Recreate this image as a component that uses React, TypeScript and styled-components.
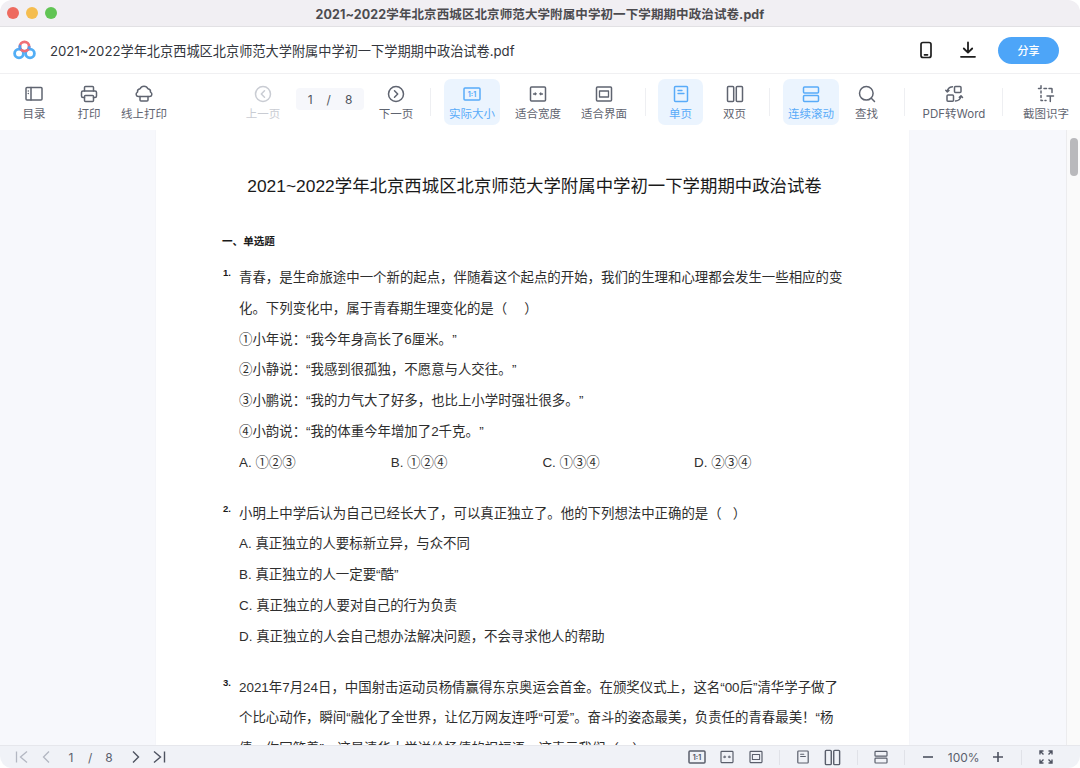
import React from 'react';
import styled, { createGlobalStyle } from 'styled-components';

const Global = createGlobalStyle`
  html, body { margin: 0; padding: 0; background: #fff; width: 1080px; height: 768px; overflow: hidden; }
  body { font-family: "Inter", "Noto Sans CJK SC", sans-serif; }
  * { box-sizing: border-box; }
`;
const FONT = `"Liberation Sans", "Noto Sans CJK SC", sans-serif`;
const UI = `"Inter", "Noto Sans CJK SC", sans-serif`;

const Win = styled.div`
  width: 1080px; height: 768px; border-radius: 12px; overflow: hidden;
  display: flex; flex-direction: column; background: #fff;
`;
const TitleBar = styled.div`
  height: 27px; flex: none; background: #f1eff3; border-bottom: 1px solid #e2e1e4;
  position: relative; display: flex; align-items: center; justify-content: center;
  font: 700 12.5px ${UI}; color: #4c4b4f; letter-spacing: 0.1px;
`;
const Lights = styled.div`
  position: absolute; left: 7px; top: 7px; display: flex; gap: 7px;
`;
const Light = styled.span<{ $c: string }>`
  width: 12px; height: 12px; border-radius: 50%; background: ${p => p.$c};
`;
const Header = styled.div`
  height: 47px; flex: none; display: flex; align-items: center; padding: 0 21px 0 13px;
  border-bottom: 1px solid #f0f0f2; background: #fff;
`;
const Logo = styled.svg`width: 23px; height: 20px; flex: none;`;
const FileName = styled.div`
  margin-left: 14px; font: 400 13.2px ${UI}; color: #33363d; flex: 1; white-space: nowrap;
`;
const HeadIcon = styled.svg`width: 18px; height: 18px; flex: none; margin-right: 24px;`;
const ShareBtn = styled.div`
  width: 61px; height: 27px; border-radius: 14px; background: #4da5f8; color: #fff;
  font: 500 11px ${UI}; display: flex; align-items: center; justify-content: center; margin-left: -3px;
`;
const Toolbar = styled.div`
  height: 56px; flex: none; display: flex; align-items: flex-start; padding: 5px 0 0 9px; background: #fff;
`;
const Tool = styled.div<{ $w: number; $ml?: number; $on?: boolean; $off?: boolean }>`
  width: ${p => p.$w}px; height: 46px; margin-left: ${p => p.$ml ?? 0}px; flex: none;
  display: flex; flex-direction: column; align-items: center; padding-top: 5px;
  border-radius: 7px; white-space: nowrap;
  background: ${p => (p.$on ? '#ebf4fe' : 'transparent')};
  color: ${p => (p.$on ? '#58abf9' : p.$off ? '#c9ccd3' : '#5f6470')};
  font: 400 11.5px/15px ${UI};
  svg { width: 20px; height: 20px; margin-bottom: 3px; flex: none; }
`;
const PageBox = styled.div`
  width: 68px; height: 22px; margin: 9px 0 0 11px; flex: none; border-radius: 4px; background: #f6f7fb;
  display: flex; align-items: center; justify-content: center; gap: 14px;
  font: 400 12px ${UI}; color: #50545e;
`;
const Divider = styled.div<{ $ml: number }>`
  width: 1px; height: 28px; margin: 9px 0 0 ${p => p.$ml}px; background: #eeeff2; flex: none;
`;
const Content = styled.div`
  flex: 1; min-height: 0; display: flex; background: #f7f8fc; overflow: hidden;
`;
const Gutter = styled.div<{ $w: number }>`width: ${p => p.$w}px; flex: none;`;
const Sheet = styled.div`
  width: 753px; flex: none; background: #fff; padding: 43px 60px 0 66px;
  color: #2e2e2e; font: 400 13.41px/30.8px ${FONT}; overflow: hidden;
  box-shadow: 0 0 2px rgba(0,0,0,0.04);
`;
const DocTitle = styled.h1`
  margin: 0 0 33px 0; font: 400 17.4px/26px ${FONT}; color: #1a1a1a; text-align: center; white-space: nowrap; padding-right: 2px;
`;
const Section = styled.div`
  font: 700 10.6px/18px ${FONT}; color: #1a1a1a; margin-bottom: 13px;
`;
const Question = styled.div`
  position: relative; padding-left: 17px; margin-bottom: 20px;
`;
const Num = styled.span`
  position: absolute; left: 1px; top: 0; font: 700 9.5px/20px ${FONT}; color: #1a1a1a;
`;
const Line = styled.div`white-space: nowrap;`;
const ClosingQuote = styled.span`margin-left: 7px;`;
const Options = styled.div`
  display: grid; grid-template-columns: repeat(4, 151.7px); white-space: nowrap;
`;
const Scrollbar = styled.div`
  width: 14px; flex: none; background: #fafafa; border-left: 1px solid #ececee; padding: 8px 0 0 3px;
`;
const Thumb = styled.div`width: 8px; height: 38px; border-radius: 4px; background: #b9b9bc;`;
const Footer = styled.div`
  height: 23px; flex: none; background: #f0f2f7; border-top: 1px solid #e6e7ec; display: flex; align-items: center;
  padding-left: 14px; color: #5a5f6c; font: 400 12px ${UI};
`;
const FootIcon = styled.svg<{ $ml?: number; $s?: number }>`
  width: ${p => p.$s ?? 16}px; height: ${p => p.$s ?? 16}px; margin-left: ${p => p.$ml ?? 0}px; flex: none;
`;
const FootText = styled.span<{ $ml: number; $w?: number }>`
  margin-left: ${p => p.$ml}px; ${p => (p.$w ? `width:${p.$w}px;` : '')} flex: none; text-align: center;
`;
const FootDiv = styled.div<{ $ml: number }>`
  width: 1px; height: 15px; background: #e0e2e8; margin-left: ${p => p.$ml}px; flex: none;
`;
const RatioLabel = styled.text`
  font: 700 7px ${UI}; fill: currentColor; stroke: none; text-anchor: middle;
`;

const S = { fill: 'none', stroke: 'currentColor', strokeWidth: 1.5, strokeLinecap: 'round' as const, strokeLinejoin: 'round' as const };
const Ic = ({ children }: { children: React.ReactNode }) => <svg viewBox="0 0 20 20" {...S}>{children}</svg>;

const ActualGlyph = () => (
  <>
    <rect x="2" y="4" width="16" height="12" rx="1" />
    <RatioLabel x="10" y="12.5">1:1</RatioLabel>
  </>
);
const WidthGlyph = () => (
  <>
    <rect x="2.5" y="3" width="15" height="14" rx="1" />
    <path d="M5.5 10h2M12.5 10h2" strokeWidth="1.3" />
    <path d="M7 8.8v2.4l1.5-1.2zM13 8.8v2.4L11.5 10z" fill="currentColor" strokeWidth=".6" />
  </>
);
const FitGlyph = () => (
  <>
    <rect x="2.5" y="3" width="15" height="14" rx="1" />
    <rect x="5.5" y="7" width="9" height="6" strokeWidth="1.3" />
  </>
);
const SingleGlyph = () => (
  <>
    <rect x="3.5" y="2.5" width="13" height="15" rx="1" />
    <path d="M7 6.5h4M7 9.5h6" strokeWidth="1.3" />
  </>
);
const DoubleGlyph = () => (
  <>
    <rect x="2.5" y="2.5" width="6.2" height="15" rx="1" />
    <rect x="11.3" y="2.5" width="6.2" height="15" rx="1" />
  </>
);
const ScrollGlyph = () => (
  <>
    <rect x="2.5" y="3" width="15" height="6" rx="1" />
    <rect x="2.5" y="11.5" width="15" height="6" rx="1" />
  </>
);

const page = (
  <Sheet>
    <DocTitle>2021~2022学年北京西城区北京师范大学附属中学初一下学期期中政治试卷</DocTitle>
    <Section>一、单选题</Section>
    <Question>
      <Num>1.</Num>
      <Line>青春，是生命旅途中一个新的起点，伴随着这个起点的开始，我们的生理和心理都会发生一些相应的变</Line>
      <Line>化。下列变化中，属于青春期生理变化的是（　&nbsp;）</Line>
      <Line>①小年说：“我今年身高长了6厘米。<ClosingQuote>”</ClosingQuote></Line>
      <Line>②小静说：“我感到很孤独，不愿意与人交往。<ClosingQuote>”</ClosingQuote></Line>
      <Line>③小鹏说：“我的力气大了好多，也比上小学时强壮很多。<ClosingQuote>”</ClosingQuote></Line>
      <Line>④小韵说：“我的体重今年增加了2千克。<ClosingQuote>”</ClosingQuote></Line>
      <Options>
        <span>A. ①②③</span><span>B. ①②④</span><span>C. ①③④</span><span>D. ②③④</span>
      </Options>
    </Question>
    <Question>
      <Num>2.</Num>
      <Line>小明上中学后认为自己已经长大了，可以真正独立了。他的下列想法中正确的是（&nbsp;&nbsp;&nbsp;）</Line>
      <Line>A. 真正独立的人要标新立异，与众不同</Line>
      <Line>B. 真正独立的人一定要“酷”</Line>
      <Line>C. 真正独立的人要对自己的行为负责</Line>
      <Line>D. 真正独立的人会自己想办法解决问题，不会寻求他人的帮助</Line>
    </Question>
    <Question>
      <Num>3.</Num>
      <Line>2021年7月24日，中国射击运动员杨倩赢得东京奥运会首金。在颁奖仪式上，这名“00后”清华学子做了</Line>
      <Line>个比心动作，瞬间“融化了全世界，让亿万网友连呼“可爱”。奋斗的姿态最美，负责任的青春最美！“杨</Line>
      <Line>倩，你回答着”，这是清华大学送给杨倩的祝福语，这表示我们（　）</Line>
    </Question>
  </Sheet>
);

export default function App() {
  return (
    <Win>
      <Global />
      <TitleBar>
        <Lights>
          <Light $c="#ee6a5f" /><Light $c="#f5bd4f" /><Light $c="#61c454" />
        </Lights>
        2021~2022学年北京西城区北京师范大学附属中学初一下学期期中政治试卷.pdf
      </TitleBar>
      <Header>
        <Logo viewBox="0 0 23 20" fill="none" strokeWidth="2.8">
          <circle cx="6" cy="13.5" r="4.4" stroke="#52aef5" />
          <circle cx="17" cy="13.5" r="4.4" stroke="#52aef5" />
          <circle cx="11.5" cy="6.5" r="4.6" stroke="#ef6f78" />
          <path d="M7.5 9.5A4.6 4.6 0 0 1 7.2 5M15.6 9.2a4.6 4.6 0 0 0 .5-3" stroke="#4d9df0" />
        </Logo>
        <FileName>2021~2022学年北京西城区北京师范大学附属中学初一下学期期中政治试卷.pdf</FileName>
        <HeadIcon viewBox="0 0 18 18" fill="none" stroke="#1f1f1f" strokeWidth="1.7" strokeLinecap="round">
          <rect x="4" y="1.5" width="10" height="15" rx="2" />
          <path d="M7.5 13.8h3" />
        </HeadIcon>
        <HeadIcon viewBox="0 0 18 18" fill="none" stroke="#1f1f1f" strokeWidth="1.8" strokeLinecap="round" strokeLinejoin="round">
          <path d="M9 1.5v10M4.8 7.5 9 11.7l4.2-4.2M2 15.8h14" />
        </HeadIcon>
        <ShareBtn>分享</ShareBtn>
      </Header>
      <Toolbar>
        <Tool $w={50}>
          <Ic><rect x="2" y="3.5" width="16" height="12.5" rx="1" /><path d="M7 3.5V16M4.3 7v.1M4.3 9.5v.1" /></Ic>目录
        </Tool>
        <Tool $w={50} $ml={5}>
          <Ic><path d="M5.5 13.5H4a1.5 1.5 0 0 1-1.5-1.5V8.5A1.5 1.5 0 0 1 4 7h12a1.5 1.5 0 0 1 1.5 1.5V12a1.5 1.5 0 0 1-1.5 1.5h-1.5" /><path d="M5.5 7V3.5a1 1 0 0 1 1-1h7a1 1 0 0 1 1 1V7" /><rect x="5.5" y="11.5" width="9" height="6" rx="1" /></Ic>打印
        </Tool>
        <Tool $w={50} $ml={5}>
          <Ic><path d="M6 12.5H4.5a2.3 2.3 0 0 1-1-4.4 3 3 0 0 1 2.6-3.3 4.2 4.2 0 0 1 7.8 0 3 3 0 0 1 2.6 3.3 2.3 2.3 0 0 1-1 4.4H6z" /><path d="M6 12.5V16a1 1 0 0 0 1 1h6a1 1 0 0 0 1-1v-3.5" /></Ic>线上打印
        </Tool>
        <Tool $w={44} $ml={72} $off>
          <Ic><circle cx="10" cy="10" r="7.5" /><path d="M11.5 6.8 8.3 10l3.2 3.2" /></Ic>上一页
        </Tool>
        <PageBox><span>1</span><span>/</span><span>8</span></PageBox>
        <Tool $w={44} $ml={10}>
          <Ic><circle cx="10" cy="10" r="7.5" /><path d="M8.5 6.8 11.7 10l-3.2 3.2" /></Ic>下一页
        </Tool>
        <Divider $ml={12} />
        <Tool $w={56} $ml={13} $on><Ic><ActualGlyph /></Ic>实际大小</Tool>
        <Tool $w={56} $ml={10}><Ic><WidthGlyph /></Ic>适合宽度</Tool>
        <Tool $w={56} $ml={10}><Ic><FitGlyph /></Ic>适合界面</Tool>
        <Divider $ml={13} />
        <Tool $w={45} $ml={12} $on><Ic><SingleGlyph /></Ic>单页</Tool>
        <Tool $w={45} $ml={9}><Ic><DoubleGlyph /></Ic>双页</Tool>
        <Divider $ml={12} />
        <Tool $w={56} $ml={13} $on><Ic><ScrollGlyph /></Ic>连续滚动</Tool>
        <Tool $w={45} $ml={5}>
          <Ic><circle cx="9.3" cy="9.3" r="6.8" /><path d="m14.3 14.3 3.2 3.2" /></Ic>查找
        </Tool>
        <Divider $ml={15} />
        <Tool $w={66} $ml={16}>
          <Ic><rect x="10.5" y="2.5" width="6.5" height="6" rx="1" /><rect x="3" y="11" width="6.5" height="6.2" rx="1" /><path d="M8.5 2.8C5.5 3 3.5 4.8 3.3 8M1.8 6.3 3.3 8 5 6.5M11.5 17c3-.2 5.2-2 5.5-5.2M18.5 13.500 17 11.800l-1.700 1.500" /></Ic>PDF转Word
        </Tool>
        <Divider $ml={15} />
        <Tool $w={56} $ml={15}>
          <Ic><path d="M5 1.8v2.700M2.500 4.500H5M8 4.500h2.500M13 4.500h2.500a.5.500 0 0 1 .5.500v3.500M5 7v2M5 11.500v2M5 16v.5h1.500M9 16.500h1" /><path d="M11 12h6.500M14.300 12v5.500" /></Ic>截图识字
        </Tool>
      </Toolbar>
      <Content>
        <Gutter $w={156} />
        {page}
        <Gutter $w={157} />
        <Scrollbar><Thumb /></Scrollbar>
      </Content>
      <Footer>
        <FootIcon viewBox="0 0 16 16" fill="none" stroke="#b3b7c2" strokeWidth="1.3"><path d="M2.500 2.500v11M13 2.500 6.500 8l6.500 5.500" /></FootIcon>
        <FootIcon viewBox="0 0 16 16" fill="none" stroke="#b3b7c2" strokeWidth="1.3" $ml={8}><path d="M11 2.500 5.500 8l5.500 5.500" /></FootIcon>
        <FootText $ml={14.5}>1</FootText>
        <FootText $ml={14.5}>/</FootText>
        <FootText $ml={13}>8</FootText>
        <FootIcon viewBox="0 0 16 16" fill="none" stroke="#4d5260" strokeWidth="1.4" $ml={15}><path d="M5 2.500 10.500 8 5 13.500" /></FootIcon>
        <FootIcon viewBox="0 0 16 16" fill="none" stroke="#4d5260" strokeWidth="1.4" $ml={7}><path d="M3 2.500 9.500 8 3 13.500M13.500 2.500v11" /></FootIcon>
        <FootIcon viewBox="0 0 20 20" {...S} $ml={520} $s={20}><ActualGlyph /></FootIcon>
        <FootIcon viewBox="0 0 20 20" {...S} $ml={12}><WidthGlyph /></FootIcon>
        <FootIcon viewBox="0 0 20 20" {...S} $ml={13}><FitGlyph /></FootIcon>
        <FootDiv $ml={15} />
        <FootIcon viewBox="0 0 20 20" {...S} $ml={15}><SingleGlyph /></FootIcon>
        <FootIcon viewBox="0 0 20 20" {...S} $ml={12.5} $s={19}><DoubleGlyph /></FootIcon>
        <FootDiv $ml={14.5} />
        <FootIcon viewBox="0 0 20 20" {...S} $ml={15}><ScrollGlyph /></FootIcon>
        <FootDiv $ml={15} />
        <FootIcon viewBox="0 0 16 16" fill="none" stroke="#4d5260" strokeWidth="1.6" $ml={15}><path d="M3 8h10" /></FootIcon>
        <FootText $ml={12} $w={32}>100%</FootText>
        <FootIcon viewBox="0 0 16 16" fill="none" stroke="#4d5260" strokeWidth="1.6" $ml={10}><path d="M3 8h10M8 3v10" /></FootIcon>
        <FootDiv $ml={15} />
        <FootIcon viewBox="0 0 16 16" fill="none" stroke="#4d5260" strokeWidth="1.4" $ml={16}><path d="M2 5.500V2h3.500M14 5.500V2h-3.500M2 10.500V14h3.500M14 10.500V14h-3.500M2.500 2.500l3 3M13.500 2.500l-3 3M2.500 13.500l3-3M13.500 13.500l-3-3" /></FootIcon>
      </Footer>
    </Win>
  );
}
